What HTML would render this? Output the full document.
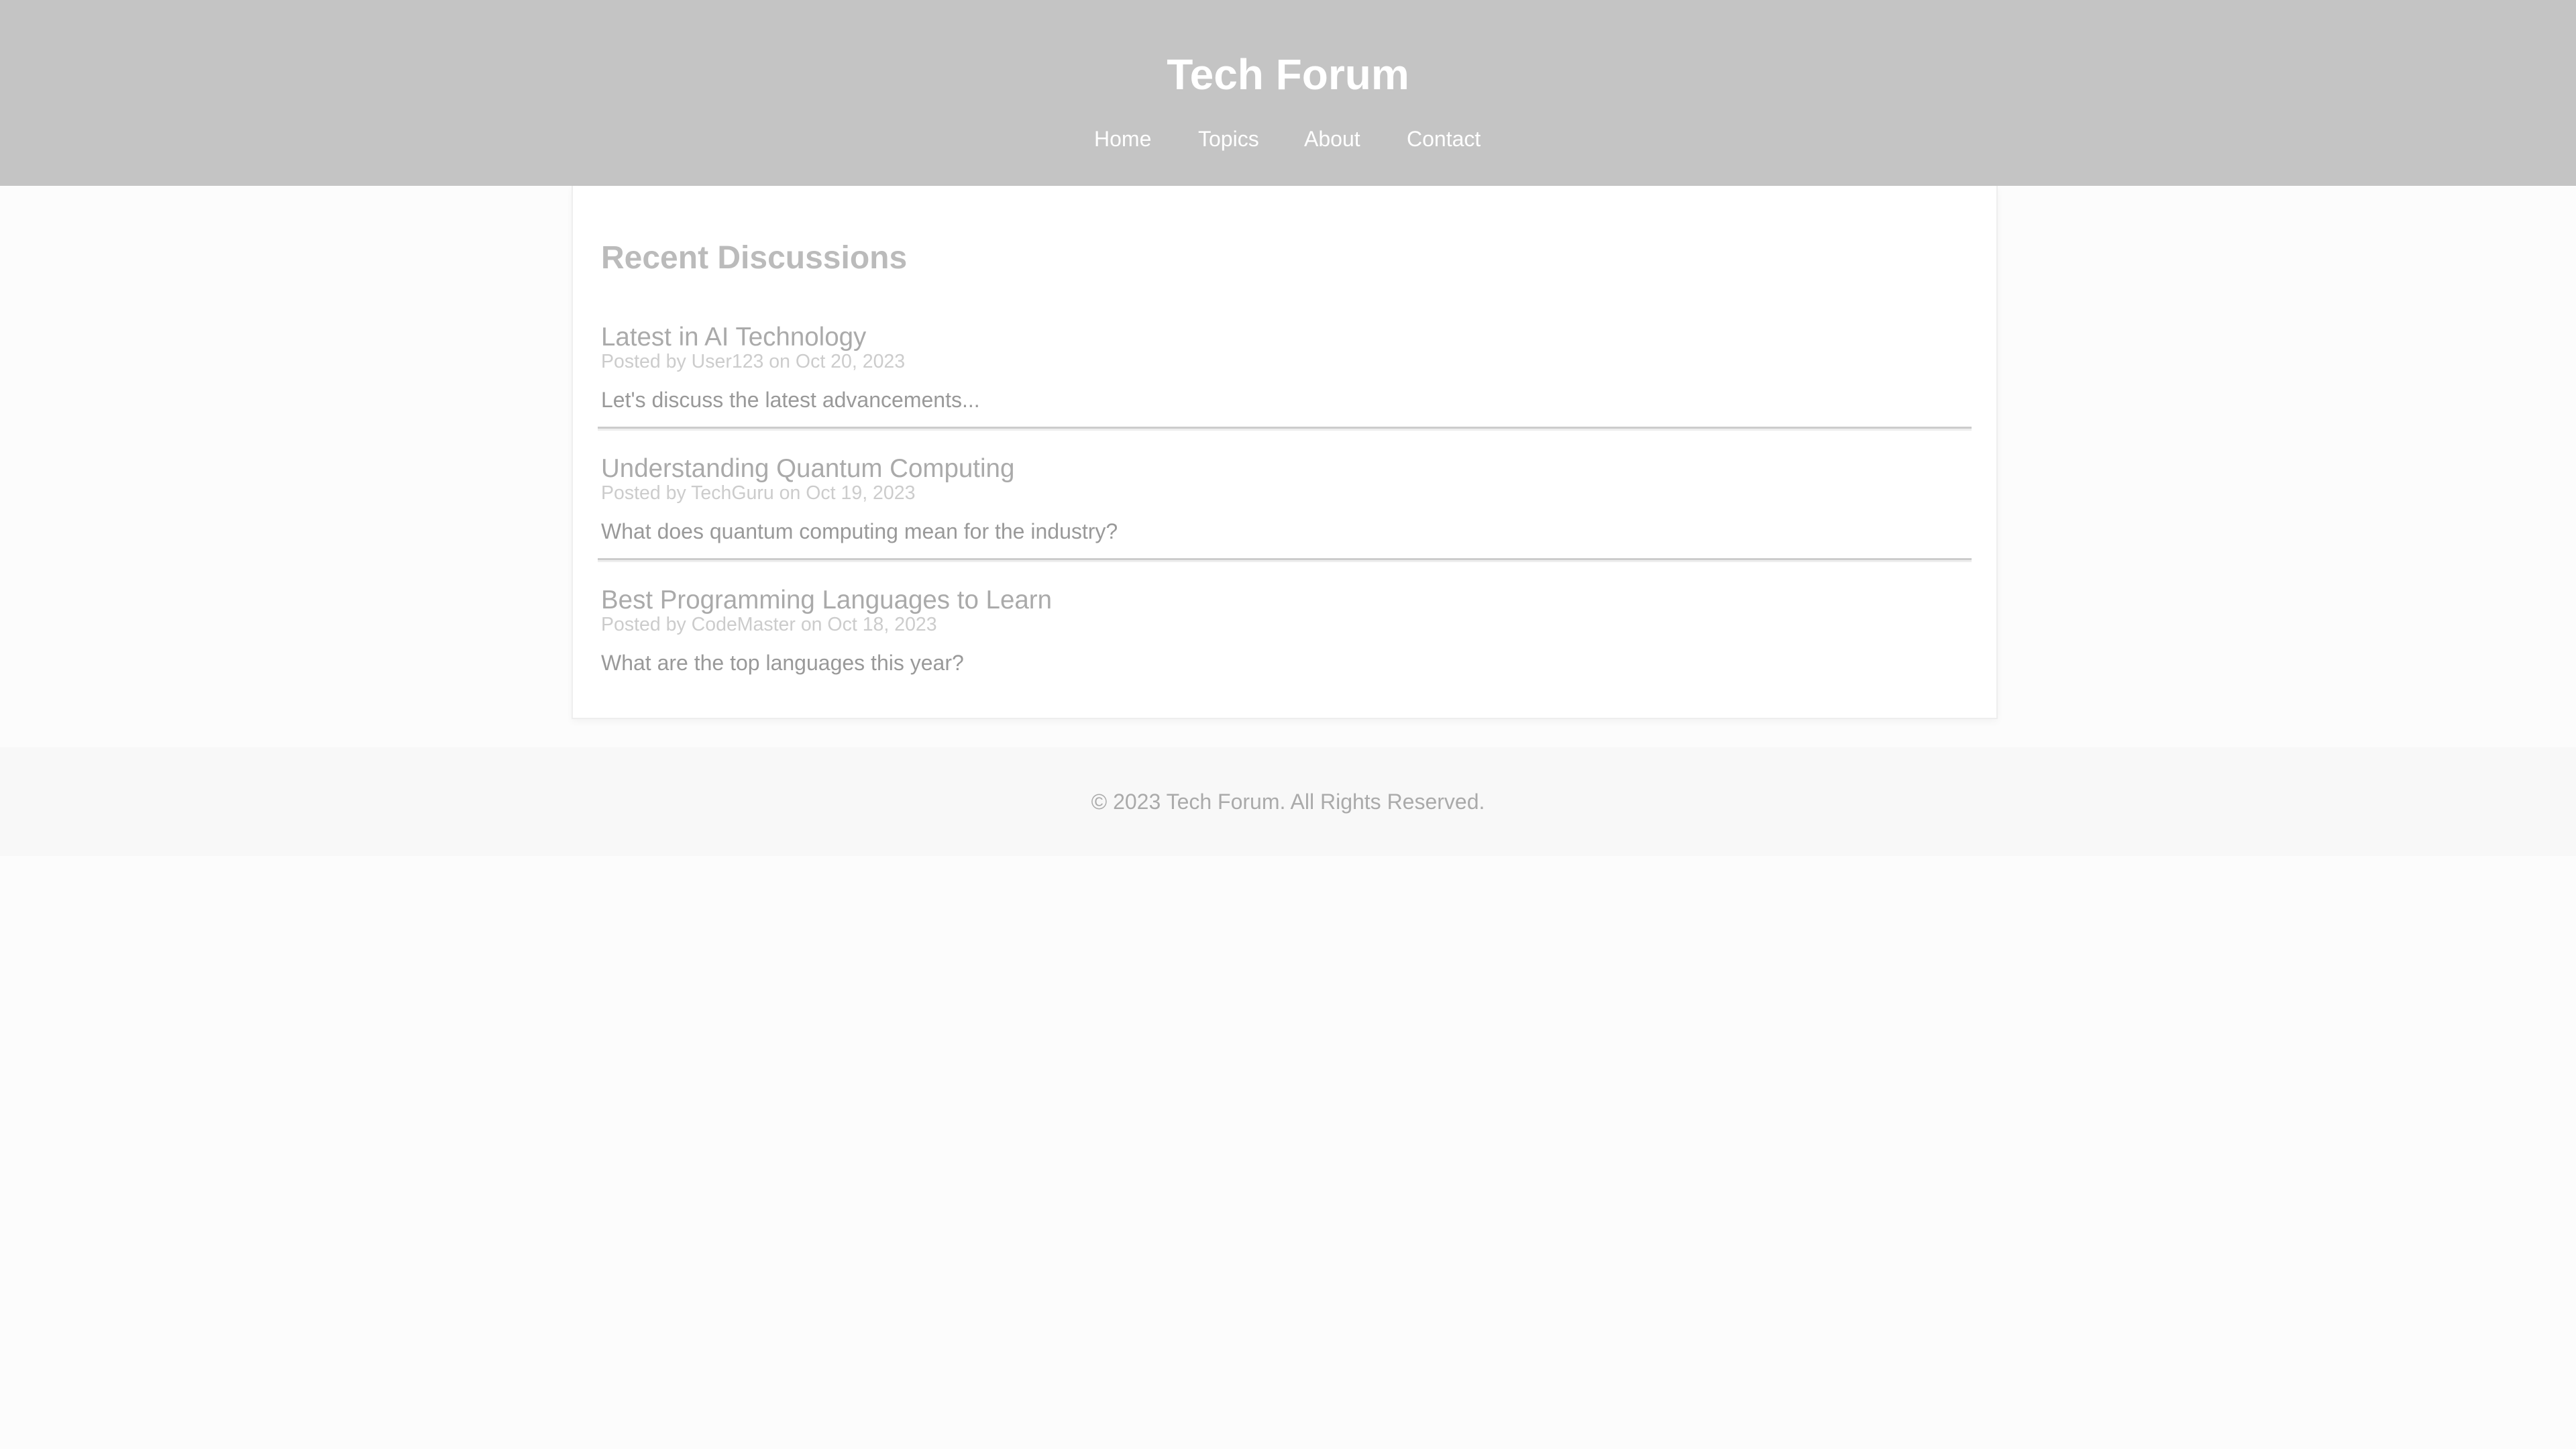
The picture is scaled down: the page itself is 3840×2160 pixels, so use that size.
<!DOCTYPE html>
<html><head><meta charset="utf-8"><style>
*{margin:0;padding:0;box-sizing:border-box}
body{width:3840px;height:2160px;background:#fcfcfc;font-family:"Liberation Sans",sans-serif;position:relative;overflow:hidden}
.a{position:absolute;white-space:nowrap;line-height:1}
header{position:absolute;left:0;top:0;width:3840px;height:277px;background:#c4c4c4}
.main{position:absolute;left:852px;top:277px;width:2126px;height:795px;background:#fff;border:2px solid #eee;border-top:none;box-shadow:0 4px 10px rgba(0,0,0,.04)}
.hr{position:absolute;left:891px;width:2048px;height:6px;border-top:3px solid #ccc;border-bottom:3px solid #eee}
footer{position:absolute;left:0;top:1114px;width:3840px;height:162px;background:#f8f8f8}
.t{color:#aaa;font-size:38.5px}
.m{color:#ccc;font-size:28.5px}
.d{color:#999;font-size:32px}
</style></head><body>
<header></header>
<div class="a" style="left:0;width:3840px;text-align:center;top:79px;font-size:64px;font-weight:bold;color:#fff">Tech Forum</div>
<div class="a" style="left:1631px;top:191px;font-size:32px;color:#fff">Home</div>
<div class="a" style="left:1786px;top:191px;font-size:32px;color:#fff">Topics</div>
<div class="a" style="left:1944px;top:191px;font-size:32px;color:#fff">About</div>
<div class="a" style="left:2097px;top:191px;font-size:32px;color:#fff">Contact</div>
<div class="main"></div>
<div class="a" style="left:896px;top:361px;font-size:48px;font-weight:bold;color:#bbb">Recent Discussions</div>
<div class="a t" style="left:896px;top:484px">Latest in AI Technology</div>
<div class="a m" style="left:896px;top:525px">Posted by User123 on Oct 20, 2023</div>
<div class="a d" style="left:896px;top:580px">Let's discuss the latest advancements...</div>
<div class="hr" style="top:636px"></div>
<div class="a t" style="left:896px;top:680px">Understanding Quantum Computing</div>
<div class="a m" style="left:896px;top:721px">Posted by TechGuru on Oct 19, 2023</div>
<div class="a d" style="left:896px;top:776px">What does quantum computing mean for the industry?</div>
<div class="hr" style="top:832px"></div>
<div class="a t" style="left:896px;top:876px">Best Programming Languages to Learn</div>
<div class="a m" style="left:896px;top:917px">Posted by CodeMaster on Oct 18, 2023</div>
<div class="a d" style="left:896px;top:972px">What are the top languages this year?</div>
<footer></footer>
<div class="a" style="left:0;width:3840px;text-align:center;top:1179px;font-size:32px;color:#aaa">© 2023 Tech Forum. All Rights Reserved.</div>
</body></html>
